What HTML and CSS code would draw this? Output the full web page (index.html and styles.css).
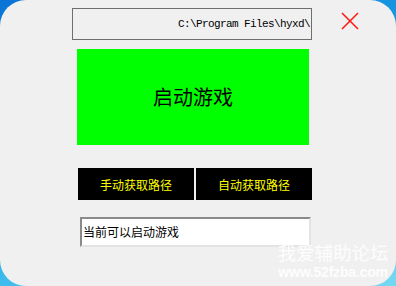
FILE: index.html
```html
<!DOCTYPE html>
<html>
<head>
    <link rel="stylesheet" href="styles.css">
</head>
<body>
    <div class="window">
        <div class="top">
            <div class="path-box">C:\Program Files\hyxd\</div>
            <svg class="close" width="18" height="18" viewBox="0 0 18 18">
                <line x1="1" y1="1" x2="17" y2="17" stroke="#ff1a10" stroke-width="1.6"/>
                <line x1="17" y1="1" x2="1" y2="17" stroke="#ff1a10" stroke-width="1.6"/>
            </svg>
        </div>

        <div class="launch">启动游戏</div>

        <div class="btn-row">
            <div class="btn">手动获取路径</div>
            <div class="btn">自动获取路径</div>
        </div>

        <div class="status">当前可以启动游戏</div>

        <div class="watermark">
            <div class="wm-title">我爱辅助论坛</div>
            <div class="wm-url">www.52fzba.com</div>
        </div>
    </div>
</body>
</html>
```

FILE: styles.css
```css
/* page + window frame */
body {
    margin: 0;
    width: 396px;
    height: 286px;
    overflow: hidden;
    background: linear-gradient(160deg, #0a74d6 0%, #1c9ee4 45%, #4cc8f0 75%, #74d8f2 100%);
    font-family: "Noto Sans CJK SC", sans-serif;
}

.window {
    position: relative;
    width: 396px;
    height: 286px;
    border-radius: 26px;
    background-color: #f0f0f0;
    overflow: hidden;
}

/* path + close */
.top {
    display: flex;
    align-items: flex-start;
    padding: 8px 0 0 72px;
}

.path-box {
    box-sizing: border-box;
    width: 240px;
    height: 32px;
    border: 1px solid #6e6e6e;
    padding-right: 1px;
    text-align: right;
    white-space: nowrap;
    overflow: hidden;
    font-family: "Liberation Mono", monospace;
    font-size: 11px;
    letter-spacing: -0.6px;
    line-height: 30px;
    color: #000;
}

.close {
    display: block;
    margin: 4px 0 0 29px;
}

/* big green button */
.launch {
    width: 232px;
    height: 96px;
    margin: 9px 0 0 77px;
    background-color: #00ff00;
    color: #000;
    font-size: 20px;
    line-height: 1;
    display: flex;
    align-items: center;
    justify-content: center;
}

/* path buttons */
.btn-row {
    display: flex;
    gap: 2px;
    margin: 23px 0 0 78px;
}

.btn {
    width: 116px;
    height: 32px;
    background-color: #000;
    color: #ffff00;
    font-size: 12px;
    display: flex;
    align-items: center;
    justify-content: center;
}

/* status line */
.status {
    box-sizing: border-box;
    width: 231px;
    height: 30px;
    margin: 17px 0 0 80px;
    padding-left: 1px;
    background-color: #fff;
    border: 2px solid;
    border-color: #8a8a8a #e3e3e3 #e3e3e3 #8a8a8a;
    font-size: 12px;
    line-height: 26px;
    color: #000;
}

/* watermark overlay */
.watermark {
    position: absolute;
    left: 277px;
    top: 242px;
    width: 112px;
    color: rgba(255, 255, 255, 0.9);
    text-align: center;
}

.wm-title {
    font-size: 18.5px;
    line-height: 20px;
}

.wm-url {
    margin-top: 4px;
    font-family: "Liberation Sans", sans-serif;
    font-weight: bold;
    font-size: 14px;
    line-height: 12px;
    letter-spacing: -0.2px;
}
```
